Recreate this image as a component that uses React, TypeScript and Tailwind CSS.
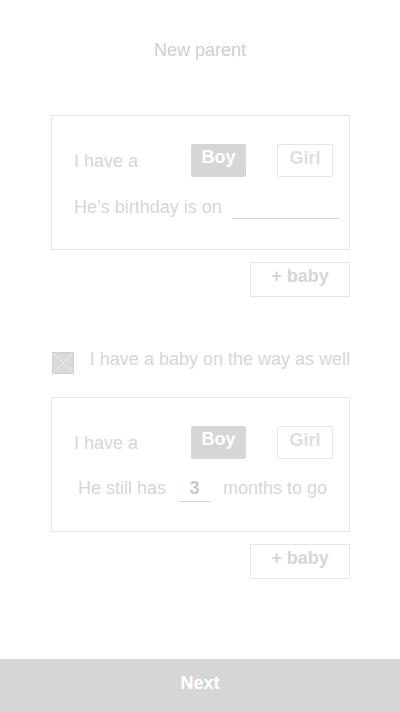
const textColor = 'text-[#d6d6d6]'

const GenderRow = () => (
    <div className="flex items-center h-[33px]">
        <span className={`${textColor} text-[18px] leading-[24px]`}>I have a</span>
        <div className="ml-auto flex gap-[31px]">
            <button className="w-[55px] h-[33px] rounded-[2px] bg-[#d6d6d6] text-white font-bold text-[18px] leading-[27px] flex justify-center">
                Boy
            </button>
            <button className="w-[56px] h-[33px] rounded-[2px] border border-[#e6e6e6] text-[#dedede] font-bold text-[18px] leading-[27px] flex justify-center">
                Girl
            </button>
        </div>
    </div>
)

const AddBaby = () => (
    <div className="flex justify-end mt-[12px]">
        <button className="w-[100px] h-[35px] border border-[#e6e6e6] text-[#d6d6d6] font-bold text-[18px] leading-[26px] flex justify-center">
            + baby
        </button>
    </div>
)

export default function App() {
    return (
        <div
            className="min-h-[712px] w-[400px] bg-white flex flex-col"
            style={{ fontFamily: '"Liberation Sans", Arial, sans-serif' }}
        >
            <div className="pt-[40px] text-center text-[18px] leading-[20px] text-[#cfcfcf]">
                New parent
            </div>

            <div className="ml-[51px] w-[299px] flex flex-col">
                {/* born baby */}
                <div className="mt-[55px] border border-[#e6e6e6] pt-[28px] pb-[30px] pl-[22px] pr-[16px]">
                    <GenderRow />
                    <div className="flex items-center mt-[18px] h-[24px]">
                        <span className={`${textColor} text-[18px] leading-[24px] whitespace-nowrap shrink-0`}>He’s birthday is on</span>
                        <div className="ml-[10px] w-[108px] shrink-0 h-[24px] border-b border-[#d6d6d6]" />
                    </div>
                </div>
                <AddBaby />

                {/* on the way */}
                <div className="flex items-start mt-[50px]">
                    <div className="w-[22px] h-[22px] mt-[5px] ml-px bg-[#dadada] border border-[#cfcfcf]">
                        <svg viewBox="0 0 20 20" className="w-full h-full">
                            <path d="M0 0 L20 20 M20 0 L0 20" stroke="#efefef" strokeWidth="1" />
                        </svg>
                    </div>
                    <span className={`ml-[16px] ${textColor} text-[18px] leading-[24px] whitespace-nowrap`}>
                        I have a baby on the way as well
                    </span>
                </div>

                <div className="mt-[23px] border border-[#e6e6e6] pt-[28px] pb-[29px] pl-[22px] pr-[16px]">
                    <GenderRow />
                    <div className="flex items-start justify-center gap-[12px] mt-[17px] h-[26px] pr-[2px]">
                        <span className={`${textColor} text-[18px] leading-[24px]`}>He still has</span>
                        <span className="w-[33px] h-[26px] border-b border-[#d6d6d6] text-center text-[#c9c9c9] font-bold text-[18px] leading-[24px]">
                            3
                        </span>
                        <span className={`${textColor} text-[18px] leading-[24px]`}>months to go</span>
                    </div>
                </div>
                <AddBaby />
            </div>

            <button className="mt-auto h-[53px] w-full bg-[#d6d6d6] text-white font-bold text-[18px] leading-[20px] pt-[14px] pb-[19px]">
                Next
            </button>
        </div>
    )
}
